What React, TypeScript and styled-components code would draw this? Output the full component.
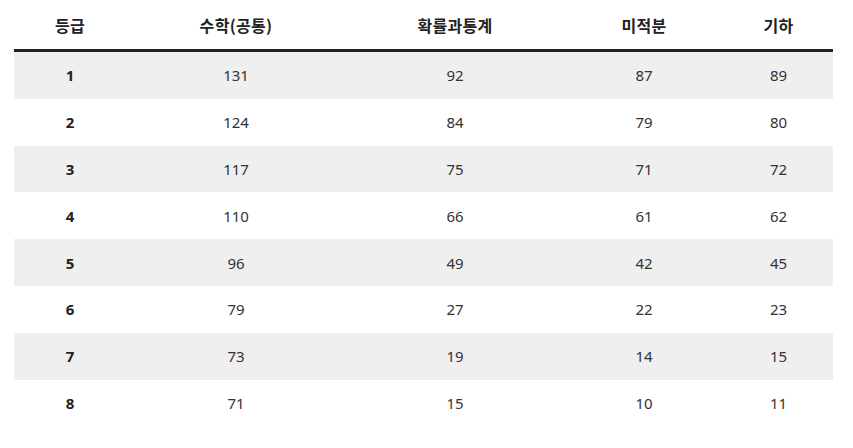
import styled, { createGlobalStyle } from "styled-components";

const GlobalStyle = createGlobalStyle`
  body {
    margin: 0;
    background: #fff;
    font-family: "Noto Sans", "Noto Sans CJK KR", sans-serif;
  }
`;

const Wrapper = styled.div`
  padding: 0 20px 0 14px;
`;

const Table = styled.table`
  width: 819px;
  border-collapse: collapse;
  table-layout: fixed;
  font-size: 15px;
  color: #333;
`;

const HeadCell = styled.th<{ w: number }>`
  width: ${({ w }) => w}px;
  height: 49px;
  padding: 0;
  font-family: "Noto Sans CJK KR", sans-serif;
  font-weight: 700;
  font-size: 16px;
  letter-spacing: 0.3px;
  color: #222;
  text-align: center;
  border-bottom: 3px solid #222;
`;

const Row = styled.tr<{ shaded: boolean }>`
  background: ${({ shaded }) => (shaded ? "#efefef" : "#fff")};
`;

const Cell = styled.td<{ strong?: boolean }>`
  height: 46.8px;
  padding: 0;
  text-align: center;
  font-weight: ${({ strong }) => (strong ? 700 : 400)};
  color: ${({ strong }) => (strong ? "#222" : "#333")};
`;

const columns = [
  { label: "등급", w: 112 },
  { label: "수학(공통)", w: 220 },
  { label: "확률과통계", w: 218 },
  { label: "미적분", w: 160 },
  { label: "기하", w: 109 },
];

const rows = [
  [1, 131, 92, 87, 89],
  [2, 124, 84, 79, 80],
  [3, 117, 75, 71, 72],
  [4, 110, 66, 61, 62],
  [5, 96, 49, 42, 45],
  [6, 79, 27, 22, 23],
  [7, 73, 19, 14, 15],
  [8, 71, 15, 10, 11],
];

export default function App() {
  return (
    <Wrapper>
      <GlobalStyle />
      <Table>
        <thead>
          <tr>
            {columns.map((c) => (
              <HeadCell key={c.label} w={c.w}>
                {c.label}
              </HeadCell>
            ))}
          </tr>
        </thead>
        <tbody>
          {rows.map((r, i) => (
            <Row key={r[0]} shaded={i % 2 === 0}>
              {r.map((v, j) => (
                <Cell key={j} strong={j === 0}>
                  {v}
                </Cell>
              ))}
            </Row>
          ))}
        </tbody>
      </Table>
    </Wrapper>
  );
}
